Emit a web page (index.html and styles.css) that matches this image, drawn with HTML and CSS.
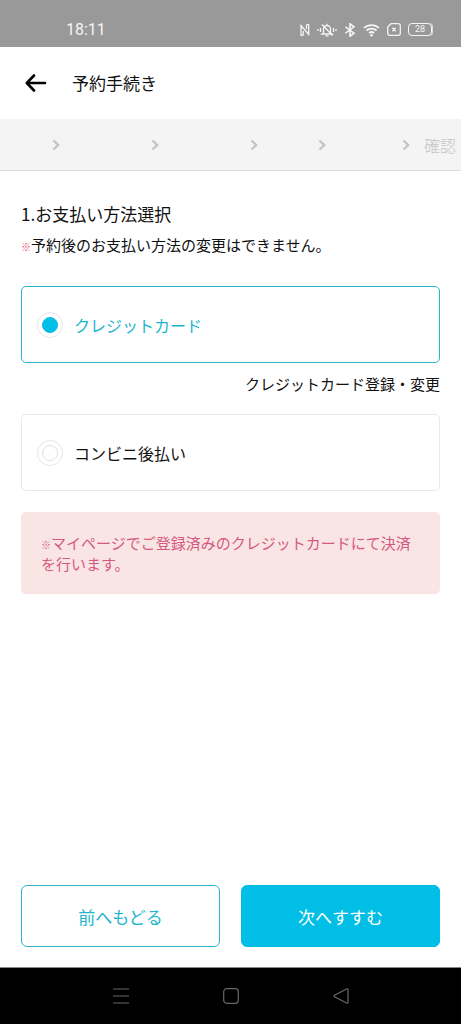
FILE: index.html
```html
<!DOCTYPE html>
<html lang="ja">
<head>
<meta charset="utf-8">
<meta name="viewport" content="width=device-width, initial-scale=1">
<title>予約手続き</title>
<link rel="stylesheet" href="styles.css">
</head>
<body>
<div class="screen">
  <div class="status-bar">
    <time class="clock">18:11</time>
    <div class="status-icons">
      <svg width="10" height="12" viewBox="0 0 10 12"><path d="M3.300 11.300H1V1.500L8.700 10.500V.7H6.500M6.500 .7v4.300M3.300 11.300V7"/></svg>
      <svg width="20" height="14" viewBox="0 0 20 14"><path d="M6.500 10V6a3.500 3.500 0 0 1 7 0v4l1.500 1H5zM8.500 12.800h3M10 .8V2.500M5 1.500l10.500 11M3.500 5v4M1 6v2M16.500 5v4M19 6v2"/></svg>
      <svg width="12" height="14" viewBox="0 0 12 14"><path d="M1.500 3.800l8.500 6.400-4 3V.8l4 3-8.500 6.400" stroke-width="1.600"/></svg>
      <svg width="17" height="14" viewBox="0 0 17 14"><path d="M1 5a11 11 0 0 1 15 0M3.500 7.500a7.500 7.500 0 0 1 10 0M6 10a4 4 0 0 1 5 0" stroke-width="1.700"/><circle class="solid" cx="8.500" cy="12.300" r="1.300"/></svg>
      <svg width="14" height="13" viewBox="0 0 14 13"><path d="M4 .7h7.300a2 2 0 0 1 2 2v7.600a2 2 0 0 1-2 2H2.700a2 2 0 0 1-2-2V4zM5.300 4.800l3.400 3.400M8.700 4.800L5.300 8.200"/></svg>
      <span class="battery">28</span>
    </div>
  </div>

  <header class="app-bar">
    <button class="back" type="button" aria-label="戻る">
      <svg width="22" height="20" viewBox="0 0 22 20"><path d="M20 10H2M9 2.500L1.800 10 9 17.500"/></svg>
    </button>
    <h1 class="app-title">予約手続き</h1>
  </header>

  <ol class="steps">
    <li class="step"><svg class="chevron" viewBox="0 0 8 12"><path d="M1.500 1.500L6.200 6l-4.700 4.500"/></svg></li>
    <li class="step"><svg class="chevron" viewBox="0 0 8 12"><path d="M1.500 1.500L6.200 6l-4.700 4.500"/></svg></li>
    <li class="step"><svg class="chevron" viewBox="0 0 8 12"><path d="M1.500 1.500L6.200 6l-4.700 4.500"/></svg></li>
    <li class="step"><svg class="chevron" viewBox="0 0 8 12"><path d="M1.500 1.500L6.200 6l-4.700 4.500"/></svg></li>
    <li class="step"><svg class="chevron" viewBox="0 0 8 12"><path d="M1.500 1.500L6.200 6l-4.700 4.500"/></svg></li>
    <li class="step step-last">確認</li>
  </ol>

  <main class="content">
    <h2 class="section-title">1.お支払い方法選択</h2>
    <p class="note"><span class="mark mark-alert">※</span>予約後のお支払い方法の変更はできません。</p>

    <label class="option option-selected" for="pay-card">
      <input class="radio" type="radio" id="pay-card" name="payment" checked>
      クレジットカード
    </label>
    <a class="card-link" href="#card">クレジットカード登録・変更</a>
    <label class="option" for="pay-store">
      <input class="radio" type="radio" id="pay-store" name="payment">
      コンビニ後払い
    </label>

    <p class="notice"><span class="mark">※</span>マイページでご登録済みのクレジットカードにて決済を行います。</p>

    <div class="actions">
      <button class="button" type="button">前へもどる</button>
      <button class="button button-primary" type="button">次へすすむ</button>
    </div>
  </main>

  <nav class="system-nav">
    <svg width="16" height="16" viewBox="0 0 16 16"><path d="M0 1h16M0 8h16M0 15h16"/></svg>
    <svg width="16" height="16" viewBox="0 0 16 16"><rect x=".7" y=".7" width="14.600" height="14.600" rx="3"/></svg>
    <svg width="16" height="16" viewBox="0 0 16 16"><path d="M13.500 1L1.500 7.200q-1 .8 0 1.600l12 6.200q1.500.4 1.500-1V2q0-1.400-1.500-1z"/></svg>
  </nav>
</div>
</body>
</html>
```
FILE: styles.css
```css
*,
*::before {
  box-sizing: border-box;
}

body {
  margin: 0;
  background: #fff;
  color: #111;
  font-family: "Noto Sans CJK JP", sans-serif;
  font-size: 17px;
}

h1, h2, p, ol {
  margin: 0;
  padding: 0;
}

svg {
  display: block;
  fill: none;
}

.screen {
  display: flex;
  flex-direction: column;
  min-height: 100vh;
}

.status-bar {
  display: flex;
  align-items: center;
  justify-content: space-between;
  height: 47px;
  padding: 12px 29px 0 66px;
  background: #999;
  color: #f4f4f4;
}

.clock {
  font-family: Roboto, sans-serif;
  font-size: 16px;
}

.status-icons {
  display: flex;
  align-items: center;
  gap: 7px;
  stroke: #f4f4f4;
  stroke-width: 1.3;
}

.solid {
  fill: #f4f4f4;
  stroke: none;
}

.battery {
  width: 24px;
  height: 13px;
  border: 1px solid #f4f4f4;
  border-radius: 4px;
  box-shadow: 1px 0 0 #ddd;
  font: 9px/11px Roboto, sans-serif;
  text-align: center;
}

.app-bar {
  display: flex;
  align-items: center;
  gap: 25px;
  height: 72px;
  padding: 0 25px;
}

.back {
  padding: 0;
  border: 0;
  background: none;
  stroke: #000;
  stroke-width: 2.6;
  stroke-linecap: round;
  stroke-linejoin: round;
}

.app-title,
.section-title {
  font-size: 17px;
  font-weight: 400;
  line-height: 28px;
}

.steps {
  display: grid;
  grid-template-columns: 60fr 99fr 99fr 68fr 84fr 51fr;
  align-items: center;
  height: 52px;
  border-bottom: 1px solid #ddd;
  background: #f4f4f4;
  list-style: none;
}

.step {
  display: flex;
  justify-content: flex-end;
}

.step-last {
  justify-content: flex-start;
  padding-left: 14px;
  color: #c4c4c4;
  font-size: 16px;
  font-weight: 300;
  line-height: 24px;
  white-space: nowrap;
}

.chevron {
  width: 8px;
  height: 12px;
  stroke: #c4c4c4;
  stroke-width: 2.4;
}

.content {
  display: flex;
  flex: 1;
  flex-direction: column;
  padding: 29px 21px 20px;
}

.note {
  margin: 6px 0 30px;
  font-size: 15px;
  line-height: 22px;
}

.mark {
  font-size: 10px;
  line-height: 1;
}

.mark-alert {
  color: #dc4a6c;
}

.option {
  display: flex;
  align-items: center;
  gap: 11px;
  height: 77px;
  padding: 0 15px;
  border: 1px solid #e6e8ec;
  border-radius: 5px;
  font-size: 16px;
}

.option-selected {
  border-color: #2bb8cf;
  color: #22b5cd;
}

.radio {
  display: grid;
  place-items: center;
  width: 26px;
  height: 26px;
  margin: 0;
  border: 1px solid #e4e6ea;
  border-radius: 50%;
  appearance: none;
}

.radio::before {
  content: "";
  width: 16px;
  height: 16px;
  border: 1px solid #dde1e8;
  border-radius: 50%;
}

.radio:checked::before {
  border-color: #00bee6;
  background: #00bee6;
}

.card-link {
  align-self: flex-end;
  margin: 10px 0 19px;
  color: #111;
  font-size: 15px;
  line-height: 22px;
  text-decoration: none;
}

.notice {
  margin: 21px 0;
  padding: 20px;
  border-radius: 5px;
  background: #fae5e5;
  color: #d5597e;
  font-size: 15px;
  line-height: 21px;
}

.actions {
  display: grid;
  grid-template-columns: 1fr 1fr;
  gap: 21px;
  margin-top: auto;
}

.button {
  height: 62px;
  border: 1px solid #2bb8cf;
  border-radius: 6px;
  background: #fff;
  color: #22b5cd;
  font: inherit;
}

.button-primary {
  border-color: #00bee6;
  background: #00bee6;
  color: #fff;
}

.system-nav {
  display: flex;
  align-items: center;
  justify-content: center;
  gap: 94px;
  height: 57px;
  border-top: 1px solid #888;
  background: #000;
  stroke: #686868;
  stroke-width: 1.2;
}
```
